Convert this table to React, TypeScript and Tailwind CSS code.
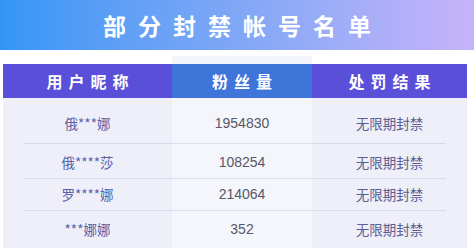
const rows = [
  { name: "俄***娜", fans: "1954830", h: "h-[46px] pt-[6px]" },
  { name: "俄****莎", fans: "108254", h: "h-[35px] pt-[2px]" },
  { name: "罗****娜", fans: "214064", h: "h-[32px]" },
  { name: "***娜娜", fans: "352", h: "h-[37px]" },
];

export default function App() {
  return (
    <div className="w-[474px] h-[252px] bg-white overflow-hidden font-['Noto_Sans_CJK_SC',sans-serif]">
      <div className="h-[50px] flex items-center justify-center bg-gradient-to-r from-[#3296f6] via-[#7fa7f6] to-[#c6b3f9]">
        <h1 className="text-white text-[23px] font-bold tracking-[12px] pl-[12px]">部分封禁帐号名单</h1>
      </div>
      <div className="flex px-[3px] pt-[6px]">
        <div className="w-[169px] flex flex-col">
          <div className="h-[8px]" />
          <div className="h-[34px] bg-[#5a4fd8] text-white font-bold text-[16px] tracking-[6px] pl-[6px] flex items-center justify-center">
            用户昵称
          </div>
          <div className="bg-[#eeeff8] pl-[21px]">
            {rows.map((r, i) => (
              <div
                key={r.name}
                className={`${r.h} flex items-center justify-center text-[13.5px] text-[#5b5fa8] ${i < rows.length - 1 ? "border-b border-[#d8dbe8]" : ""}`}
              >
                <span className="-ml-[21px]">{r.name}</span>
              </div>
            ))}
          </div>
        </div>
        <div className="w-[140px] flex flex-col">
          <div className="h-[8px] bg-[#f4f5fa]" />
          <div className="h-[34px] bg-[#3f74d9] text-white font-bold text-[16px] tracking-[6px] pl-[6px] flex items-center justify-center">
            粉丝量
          </div>
          <div className="bg-[#f5f6fb]">
            {rows.map((r, i) => (
              <div
                key={r.fans}
                className={`${r.h} flex items-center justify-center text-[14px] text-[#555866] font-['Liberation_Sans',sans-serif] ${i < rows.length - 1 ? "border-b border-[#dcdfe9]" : ""}`}
              >
                {r.fans}
              </div>
            ))}
          </div>
        </div>
        <div className="w-[155px] flex flex-col">
          <div className="h-[8px]" />
          <div className="h-[34px] bg-[#5a4fd8] text-white font-bold text-[16px] tracking-[6px] pl-[6px] flex items-center justify-center">
            处罚结果
          </div>
          <div className="bg-[#eeeff8] pr-[21px]">
            {rows.map((r, i) => (
              <div
                key={r.name}
                className={`${r.h} flex items-center justify-center text-[13.5px] text-[#5a5e92] ${i < rows.length - 1 ? "border-b border-[#d8dbe8]" : ""}`}
              >
                <span className="-mr-[21px]">无限期封禁</span>
              </div>
            ))}
          </div>
        </div>
      </div>
    </div>
  );
}
